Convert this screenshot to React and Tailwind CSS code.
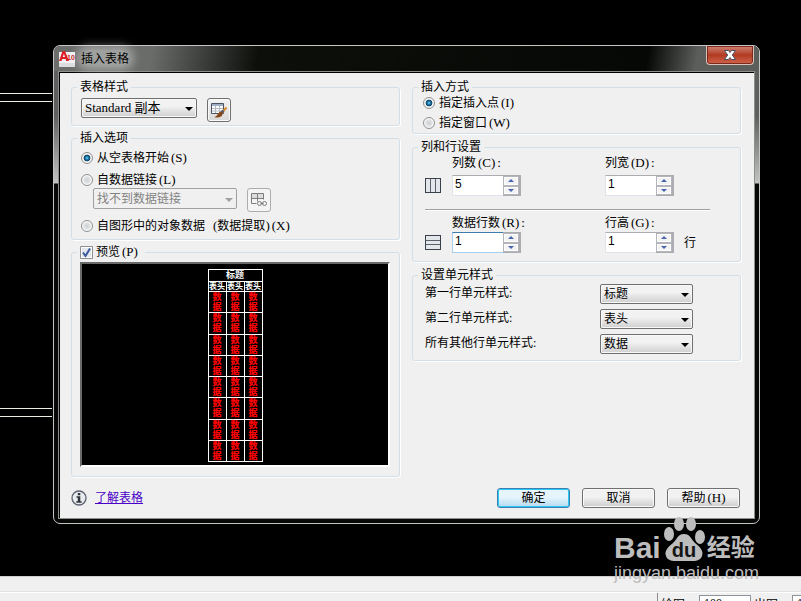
import React from "react";

const ui = "font-['Liberation_Serif','Noto_Sans_CJK_SC',serif] text-[12px] text-black";

function Key({ children }) {
  return <span className="ml-0.5 text-[13px] leading-none">{children}</span>;
}

function Group({ title, className, children }) {
  return (
    <fieldset className="min-w-0 rounded-[3px] border border-[#d3dfe8] shadow-[1px_1px_0_#fff]">
      <legend className="ml-[5px] px-[3px] leading-[14px]">{title}</legend>
      <div className={className}>{children}</div>
    </fieldset>
  );
}

function Radio({ name, defaultChecked, className = "", children }) {
  return (
    <label className={`flex h-[14px] items-center gap-1 whitespace-nowrap leading-[14px] ${className}`}>
      <input
        type="radio"
        name={name}
        defaultChecked={defaultChecked}
        className="size-3 shrink-0 appearance-none rounded-full border border-[#8e8f8f] bg-[radial-gradient(circle,#cfd2d5_0,#dfe1e3_45%,#f8f8f8_60%)] checked:bg-[radial-gradient(circle,#7fd6f5_0,#1c82b8_20%,#123c5c_44%,#f4f4f4_52%)]"
      />
      <span>{children}</span>
    </label>
  );
}

function Select({ label, id, value, disabled, className, textClass = "" }) {
  return (
    <div className={`relative ${className}`}>
      <select
        id={id}
        aria-label={label}
        disabled={disabled}
        defaultValue={value}
        className={`h-full w-full appearance-none rounded-[2px] border pl-[3px] pr-4 leading-4 ${
          disabled
            ? "border-[#a0a0a0] bg-[#f0f0f0] text-[#838383] opacity-100"
            : "border-[#707070] bg-linear-to-b from-[#f2f2f2] from-40% to-[#cfcfcf] shadow-[inset_0_0_0_1px_#f8f8f8]"
        } ${textClass}`}
      >
        <option>{value}</option>
      </select>
      <svg
        viewBox="0 0 8 4"
        className={`pointer-events-none absolute right-1 top-1/2 h-1 w-2 -translate-y-px ${disabled ? "fill-[#a0a0a0]" : "fill-black"}`}
      >
        <path d="M0 0h8L4 4z" />
      </svg>
    </div>
  );
}

function Spinner({ id, value, focused }) {
  return (
    <div className="flex h-[21px] w-[69px]">
      <input
        id={id}
        type="text"
        defaultValue={value}
        className={`w-[51px] min-w-0 border border-r-0 bg-white pb-[3px] pl-[2px] font-['Liberation_Sans',sans-serif] text-[12px] leading-4 outline-none ${
          focused ? "border-[#a9cfee] border-t-[#3d7bad]" : "border-[#e2e3ea] border-t-[#abadb3]"
        }`}
      />
      <div className="flex flex-1 flex-col border-y border-r-2 border-[#abadb3] bg-[#abadb3]">
        {["M3 0L6 3H0z", "M0 0H6L3 3z"].map((d, i) => (
          <button
            key={d}
            type="button"
            aria-label={i ? "减少" : "增加"}
            className="flex flex-1 items-center justify-center border border-[#b4b5ba] bg-[#f3f3f3] shadow-[inset_0_0_0_1px_#fff]"
          >
            <svg viewBox="0 0 6 3" className="h-[3px] w-[6px] fill-[#4965b0]">
              <path d={d} />
            </svg>
          </button>
        ))}
      </div>
    </div>
  );
}

function PushButton({ primary, children }) {
  return (
    <button
      type="button"
      className={`h-5 w-[73px] rounded-[3px] border leading-4 ${
        primary
          ? "border-[#3c7fb1] bg-linear-to-b from-[#e6f5fc] from-45% to-[#b4dbf0] shadow-[inset_0_0_0_1px_#2bc8f5]"
          : "border-[#707070] bg-linear-to-b from-[#f1f1f1] from-45% to-[#cdcdcd] shadow-[inset_0_0_0_1px_#fafafa]"
      }`}
    >
      {children}
    </button>
  );
}

function StyleBrushIcon() {
  return (
    <svg viewBox="0 0 16 16" className="size-4 shrink-0" fill="none">
      <path d="M.5 1.500h12v10H.5z" fill="#fff" stroke="#4a5362" />
      <path d="M1 2h11v2H1z" fill="#9fb0c6" />
      <path d="M4.500 4v7M8.500 4v7M1 6.500h11M1 9h11" stroke="#b3bac4" />
      <path d="M15.500 5.500l-4 4.500" stroke="#e08a2c" strokeWidth="2.200" />
      <path d="M12.500 8.500l-2.500 2.500" stroke="#53606e" strokeWidth="2.500" />
      <path d="M10.500 9.500c2 1 1.500 3.500-.5 5-2 1.300-4.500 1.400-7 .5 2-.3 2.500-1 3.500-2.500 1-1.700 2.500-3.300 4-3z" fill="#87481a" />
    </svg>
  );
}

function LinkTableIcon() {
  return (
    <svg viewBox="0 0 16 16" className="size-4 shrink-0" fill="none" stroke="#7d7d7d">
      <path d="M1 2h11v4H1z" fill="#dcdcdc" stroke="none" />
      <path d="M.5 1.500h12v6M.5 1.500v10h5M.5 6.500h12M6.500 1.500v8" />
      <circle cx="8.500" cy="11.500" r="2" />
      <circle cx="13.500" cy="11.500" r="2" />
      <path d="M9.500 11.500h3" />
    </svg>
  );
}

function GridIcon({ rows }) {
  return (
    <svg viewBox="0 0 16 16" className="size-4" fill="#e3e6ea" stroke="#3b414b">
      <rect x=".5" y=".5" width="15" height="14" />
      {rows ? (
        <path d="M1 5.500h14M1 9.500h14" stroke="#5a616c" />
      ) : (
        <path d="M5.500 1v13M10.500 1v13" stroke="#5a616c" />
      )}
    </svg>
  );
}

function Preview() {
  const cols = [0, 1, 2];
  const rows = [0, 1, 2, 3, 4, 5, 6, 7];
  return (
    <div className="flex h-[205px] justify-center border-2 border-b-white border-l-[#696969] border-r-white border-t-[#696969] bg-black pt-[5px]">
      <table className="h-[193px] w-[55px] table-fixed border-collapse text-center font-['Liberation_Sans','Noto_Sans_CJK_SC',sans-serif] text-[9px] font-black text-white">
        <thead>
          <tr className="h-3">
            <th colSpan={3} className="border border-white p-0 text-[9px] leading-[11px]">标题</th>
          </tr>
          <tr className="h-[10px]">
            {cols.map((c) => (
              <th key={c} className="whitespace-nowrap border border-white p-0 text-[8px] leading-[9px]">表头</th>
            ))}
          </tr>
        </thead>
        <tbody>
          {rows.map((r) => (
            <tr key={r} className="h-[21px]">
              {cols.map((c) => (
                <td key={c} className="border border-white p-0 leading-[10px] text-[#ff0000]">
                  数<br />据
                </td>
              ))}
            </tr>
          ))}
        </tbody>
      </table>
    </div>
  );
}

function Dialog() {
  return (
    <section
      aria-label="插入表格"
      className="absolute left-[53px] right-[41px] top-[45px] rounded-[7px] border border-[#c4c6c4] bg-[linear-gradient(180deg,#5e605e_0,#5e605e_70px,#c2c4c2_137px,#050805_138px)] px-1 pb-1"
    >
      <header className="-mx-1 flex h-[25px] items-start rounded-t-[6px] bg-[linear-gradient(100deg,#6c6e6c_0,#6a6c6a_14%,#454745_20%,#0c0f0a_29%,#060805_84%,#5c5e5c_91%)] pl-[5px]">
        <svg viewBox="0 0 16 16" className="mt-[5px] size-4">
          <path d="M0 1h16v15H0z" fill="#f1f1f3" />
          <path d="M0 12h16v4H0z" fill="#dcdce1" />
          <path d="M0 10L3.500 0h2.500l4 10H7.200L6.600 8H3.200L2.500 10zM3.800 6h2.200L4.900 2.700z" fill="#dd1f26" />
          <text x="8" y="9" fontSize="7" fontWeight="bold" fill="#c9151c" fontFamily="Liberation Sans, sans-serif">10</text>
        </svg>
        <h1 className="ml-1.5 mt-1 rounded-full bg-white/35 font-['Noto_Sans_CJK_SC',sans-serif] text-[12px] leading-4 text-black shadow-[0_0_8px_5px_rgba(255,255,255,0.35)]">
          插入表格
        </h1>
        <button
          type="button"
          aria-label="关闭"
          className="ml-auto mr-[5px] flex h-[19px] w-[48px] items-center justify-center rounded-b-[4px] border border-t-0 border-[#d9c0ba] bg-linear-to-b from-[#cf8375] from-0% via-[#b13a20] via-50% to-[#d0644c] shadow-[inset_0_0_0_1px_#7c2a1c]"
        >
          <svg viewBox="0 0 12 10" className="h-[10px] w-3 overflow-visible" fill="#fff" stroke="#4b4f66" strokeWidth="1">
            <path d="M.5.500h4L6 2.500 7.500.5h4L8.300 5l3.200 4.500h-4L6 7.500 4.500 9.500h-4L3.700 5z" />
          </svg>
        </button>
      </header>

      <div className="border border-[#8d908d] bg-black">
        <div className="m-px mr-0 mb-0 bg-[#f0f0f0] pb-2.5 pl-[11px] pr-[13px] pt-[7px]">
          <div className="grid grid-cols-2 gap-3">
            <div className="flex flex-col gap-[5px]">
              <Group title="表格样式" className="flex gap-2.5 pb-[3px] pl-[9px] pt-1">
                <Select label="表格样式" value="Standard 副本" className="h-5 w-[116px]" textClass="text-[13px]" />
                <button
                  type="button"
                  aria-label="表格样式对话框"
                  className="flex size-6 items-center justify-center rounded-[3px] border border-[#707070] bg-linear-to-b from-[#f4f4f4] to-[#d8d8d8] shadow-[inset_0_0_0_1px_#fafafa]"
                >
                  <StyleBrushIcon />
                </button>
              </Group>

              <Group title="插入选项" className="pb-[6px] pl-[9px] pt-[6px]">
                <Radio name="source" defaultChecked>从空表格开始<Key>(S)</Key></Radio>
                <Radio name="source" className="mt-2">自数据链接<Key>(L)</Key></Radio>
                <div className="ml-3 mt-px flex gap-2.5">
                  <Select label="数据链接" value="找不到数据链接" disabled className="h-[21px] w-[144px]" />
                  <button
                    type="button"
                    disabled
                    aria-label="数据链接管理器"
                    className="flex size-6 items-center justify-center rounded-[3px] border border-[#adadad] bg-[#f4f4f4]"
                  >
                    <LinkTableIcon />
                  </button>
                </div>
                <Radio name="source" className="mt-[7px]">
                  自图形中的对象数据<span className="ml-2 text-[13px]">(</span>数据提取<span className="text-[13px]">)</span><Key>(X)</Key>
                </Radio>
              </Group>

              <Group
                className="pb-[9px] pl-2 pr-[9px] pt-[3px]"
                title={
                  <label className="flex h-[14px] items-center gap-[3px] pr-1 leading-[14px]">
                    <input type="checkbox" defaultChecked className="peer sr-only" />
                    <svg viewBox="0 0 13 13" className="size-[13px]">
                      <path d="M.5.5h12v12H.5z" fill="#fff" stroke="#8e8f8f" />
                      <path d="M2 2h9v9H2z" fill="#e3e7ec" />
                      <path d="M3 6.500l2.500 3.500L10 2.500" fill="none" stroke="#3b5a9e" strokeWidth="2" />
                    </svg>
                    <span>预览<Key>(P)</Key></span>
                  </label>
                }
              >
                <Preview />
              </Group>
            </div>

            <div className="flex flex-col gap-[6px]">
              <Group title="插入方式" className="flex flex-col gap-1.5 pb-[3px] pl-2.5 pt-0.5">
                <Radio name="method" defaultChecked>指定插入点<Key>(I)</Key></Radio>
                <Radio name="method">指定窗口<Key>(W)</Key></Radio>
              </Group>

              <Group title="列和行设置" className="pb-2 pl-3 pr-[30px] pt-0.5 leading-[14px]">
                <div className="grid grid-cols-[27px_153px_1fr] gap-y-[5px]">
                  <label htmlFor="columns" className="col-start-2">列数<Key>(C)</Key><Key>:</Key></label>
                  <label htmlFor="width">列宽<Key>(D)</Key><Key>:</Key></label>
                  <div className="flex items-center"><GridIcon /></div>
                  <Spinner id="columns" value="5" />
                  <Spinner id="width" value="1" />
                </div>
                <div className="mt-[13px] border-t border-[#a0a0a0] shadow-[0_1px_0_#fff]" />
                <div className="mt-1.5 grid grid-cols-[27px_153px_1fr] gap-y-[2px]">
                  <label htmlFor="rows" className="col-start-2">数据行数<Key>(R)</Key><Key>:</Key></label>
                  <label htmlFor="height">行高<Key>(G)</Key><Key>:</Key></label>
                  <div className="flex items-center"><GridIcon rows /></div>
                  <Spinner id="rows" value="1" focused />
                  <div className="flex items-center gap-2.5">
                    <Spinner id="height" value="1" />
                    <span>行</span>
                  </div>
                </div>
              </Group>

              <Group title="设置单元样式" className="grid grid-cols-[175px_93px] gap-y-[5px] pb-[6px] pl-3 pt-0.5">
                <label htmlFor="first" className="leading-[18px]">第一行单元样式:</label>
                <Select id="first" value="标题" className="h-5" />
                <label htmlFor="second" className="leading-[18px]">第二行单元样式:</label>
                <Select id="second" value="表头" className="h-5" />
                <label htmlFor="others" className="leading-[18px]">所有其他行单元样式:</label>
                <Select id="others" value="数据" className="h-5" />
              </Group>
            </div>
          </div>

          <footer className="mt-[11px] flex items-center pr-px">
            <svg viewBox="0 0 16 16" className="size-4">
              <circle cx="8" cy="8" r="7" fill="#e9ecef" stroke="#5c6370" strokeWidth="1.300" />
              <path d="M6.800 3h2.500v2.200H6.800zM5.500 6.300h3.800v4.900h1.400v1.500H5.300v-1.500h1.500V7.800H5.500z" fill="#2f343d" />
            </svg>
            <a href="#tables" className="ml-2 leading-4 text-[#4a00c8] underline underline-offset-1">了解表格</a>
            <div className="ml-auto flex gap-3">
              <PushButton primary>确定</PushButton>
              <PushButton>取消</PushButton>
              <PushButton>帮助<Key>(H)</Key></PushButton>
            </div>
          </footer>
        </div>
      </div>
    </section>
  );
}

function Watermark() {
  return (
    <div className="pointer-events-none absolute bottom-[18px] right-[44px] w-[143px] whitespace-nowrap text-[#bdbdbd]">
      <div className="flex h-[47px] items-end gap-0.5 font-['Liberation_Sans','Noto_Sans_CJK_SC',sans-serif] font-bold">
        <span className="text-[30px] leading-[30px]">Bai</span>
        <svg viewBox="0 0 42 46" className="h-[46px] w-[42px] shrink-0" fill="#bdbdbd">
          <ellipse cx="6" cy="17" rx="5" ry="7" />
          <ellipse cx="16" cy="7" rx="5" ry="7" />
          <ellipse cx="28" cy="7" rx="5" ry="7" />
          <ellipse cx="37" cy="20" rx="5" ry="7" />
          <path d="M21 17c6 0 7 5 11 9 5 4 9 8 7 13-2 6-9 5-18 5S5 45 3 39c-2-5 2-9 7-13 4-4 5-9 11-9z" />
          <text x="21" y="40" textAnchor="middle" fontSize="20" fill="#151515">du</text>
        </svg>
        <span className="text-[24px] leading-[30px]">经验</span>
      </div>
      <div className="font-['Liberation_Sans',sans-serif] text-[18px] leading-5">jingyan.baidu.com</div>
    </div>
  );
}

export default function App() {
  return (
    <main className={`relative flex h-screen flex-col overflow-hidden bg-black ${ui}`}>
      <div className="relative flex-1">
        <svg className="absolute left-0 top-0 h-full w-[52px]" stroke="#e8efe0">
          <path d="M0 93.500h52M0 101.500h52M0 408.500h52M0 416.500h52" />
        </svg>
      </div>
      <footer className="h-[25px] shrink-0 overflow-hidden border-t border-[#d0d0d0] bg-[#f0f0f0]">
        <div className="h-[15px] border-b border-[#e0e0e0]" />
        <div className="flex border-t border-white">
          <div className="ml-auto flex w-[144px] items-start border-l border-[#8c8c8c] pl-[3px] pt-0.5">
            <label htmlFor="plot" className="w-[38px] shrink-0 pt-0.5 leading-4">绘图:</label>
            <input id="plot" defaultValue="100" className="h-5 w-[52px] shrink-0 border border-[#8e9299] bg-white px-1 pb-1 leading-[14px]" />
            <label htmlFor="out" className="ml-[3px] w-[38px] shrink-0 pt-0.5 leading-4">出图:</label>
            <input id="out" defaultValue="1" className="h-5 w-[52px] shrink-0 border border-[#8e9299] bg-white px-1 pb-1 leading-[14px]" />
          </div>
        </div>
      </footer>
      <Dialog />
      <Watermark />
    </main>
  );
}
